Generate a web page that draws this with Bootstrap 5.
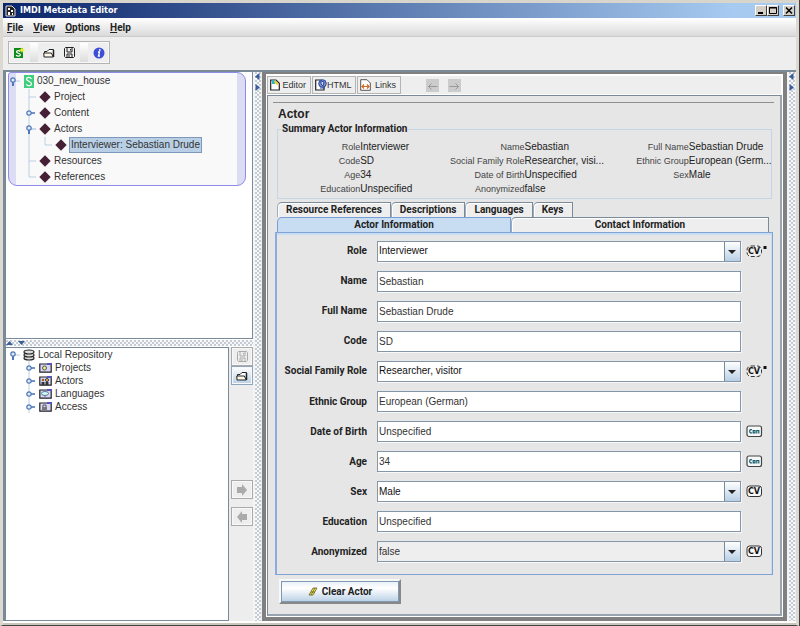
<!DOCTYPE html>
<html lang="en">
<head>
<meta charset="utf-8">
<meta name="viewport" content="width=device-width, initial-scale=1">
<title>IMDI Metadata Editor</title>
<link href="https://cdn.jsdelivr.net/npm/bootstrap@5.3.0/dist/css/bootstrap.min.css" rel="stylesheet">
<style>
:root{--slate:#7a8a99;--metal:#ededed;--form:#e6e6e6;--strong:Roboto,"Liberation Sans",Arial,sans-serif}
body{font-family:"Liberation Sans",Arial,sans-serif;font-size:10px;line-height:12px;color:#333;background:var(--metal)}
svg{display:block;flex:none}
button,input,select{font:inherit;color:inherit}
.app-window{min-height:100vh;border:3px solid #dcd9d0;border-top-color:#d8d5cc;border-bottom:1px solid #444}
.frame-right{border-right:1px solid #404040}
.title-bar{height:15px;background:linear-gradient(90deg,#0a246a,#a6caf0 92%);color:#fff;font:bold 9px/15px "DejaVu Sans Condensed","DejaVu Sans",sans-serif;padding:0 1px 0 2px}
.win-btn{width:12px;height:11px;padding:0;background:#d4d0c8;border:1px solid;border-color:#fff #404040 #404040 #fff;color:#000}
.menu-bar{height:19px;background:linear-gradient(#fff,#dadada);border-bottom:1px solid #ccc;padding:0 4px;gap:10px;font:bold 10px/17px var(--strong)}
.menu-bar a{color:#222;text-decoration:none}
.tool-area{height:33px;padding:4px 5px 0;background:#eee}
.tool-box{height:23px;border:1px solid #b4b4b4;outline:1px solid #f8f8f8;outline-offset:-2px}
.tool-box button{width:21px;border:0;background:none;padding:0;display:flex;align-items:center;justify-content:center}
.tool-gap{width:8px;height:19px;background:linear-gradient(#fff,#ddd)}
.main-split{min-height:0;border-top:2px solid var(--slate);border-left:3px solid var(--slate)}
.left-side{width:247px;min-width:0}
.tree-top{flex:266 1 0;background:#fff;border:1px solid var(--slate);border-top:0;border-left:0;padding:0 6px 0 2px}
.tree-bottom{flex:274 1 0;min-height:0}
.session-card{border:1px solid #8d8de8;border-radius:3px 9px 9px 9px;background:linear-gradient(90deg,#dcdcf4 7px,#f9f9f9 7px,#f9f9f9 calc(100% - 8px),#dcdcf4 calc(100% - 8px))}
.tree-list{list-style:none;margin:0;padding:0}
.tree-list li{display:flex;align-items:center;height:16px;gap:3px;white-space:nowrap}
.tree-list .tree-kid{margin-left:15px}
.repo-list{padding-left:3px}
.repo-list li{height:13px}
.tree-pick{background:#b8cfe5;border:1px solid #7d98bb;padding:0 1px;line-height:14px;margin-left:-1px}
.repo-panel{background:#fff;border:1px solid var(--slate);border-left:0;min-width:0}
.side-tools{width:24px;padding:0 0 0 2px}
.side-tools button{width:22px;height:19px;border:1px solid #aaa;background:#eee;padding:0;display:flex;align-items:center;justify-content:center;box-shadow:inset 0 0 0 1px #f8f8f8}
.side-tools .tool-on{background:linear-gradient(#fff,#b8cfe5);border-color:#8ea5bd}
.bumps{background:radial-gradient(circle at 1px 1px,#c3ccd6 0 .8px,transparent 1px) 0 0/4px 4px,radial-gradient(circle at 3px 3px,#c3ccd6 0 .8px,transparent 1px) 0 0/4px 4px,#f8f8f8}
.split-h{height:8px;border-top:1px solid #fff;border-bottom:1px solid #fff}
.split-v{width:9px;padding-top:1px;border-right:1px solid #eee;border-left:2px solid #f4f4f4}
.editor-frame{border:4px solid #808080;border-top-width:2px;min-width:0;background:#fff;padding:1px}
.view-bar{height:20px;background:#eee;box-shadow:inset 0 0 0 1px #fff;gap:1px}
.view-btn{height:18px;border:1px solid #b4b4b4;background:#eee;padding:0 4px 0 2px;font-size:9px;width:44px;display:flex;align-items:center;justify-content:space-between}
.nav-arrow{width:13px;height:13px;border:0;padding:0;background:#ccc}
.form-page{background:var(--form);border:1px solid var(--slate);border-right:2px solid #98a4b0;border-bottom:2px solid #98a4b0;padding:6px 7px 10px 7px;min-height:0}
.page-rule{margin:0 -1px 0 -2px;border-top:1px solid #8f8f8f;opacity:1}
.page-title{font-size:12px;line-height:14px;font-weight:bold;margin:4px 0 0 3px;color:#222}
.summary-box{border:1px solid #c5d5e6;margin:1px 1px 0 2px;padding:0 0 2px;min-width:0}
.summary-box legend{float:none;width:auto;margin:0 0 0 3px;padding:0 1px;font:bold 10px/14px var(--strong);color:#222}
.summary-grid{display:grid;grid-template-columns:repeat(6,minmax(0,1fr));grid-auto-rows:14px;margin:4px 0 0;line-height:14px;white-space:nowrap;color:#222}
.summary-grid dt{font-weight:normal;font-size:9px;text-align:right;color:#444}
.summary-grid dd{margin:0}
.tab-line{margin:0 4px 0 2px}
.tab-line-first{margin-top:3px}
.tab-btn{height:15px;border:1px solid var(--slate);border-bottom:0;border-left-color:#9dabba;background:#eee;color:#222;padding:0 8px;font:bold 10px/14px var(--strong);border-top-left-radius:5px;white-space:nowrap;box-shadow:inset 1px 1px #fff}
.tab-on{background:#c8ddf2;border-color:#7a9fd6;box-shadow:none}
.tab-panel{border:1px solid #7fa3d4;border-left:2px solid #8cabde;box-shadow:inset 0 2px #c8ddf2,inset -1px 0 #c8ddf2;padding:3px 0 7px;min-height:0}
.field-row{display:grid;grid-template-columns:90px minmax(0,1fr) 21px;column-gap:10px;align-items:center;flex:1 1 0}
.field-row label{font:bold 10px/12px var(--strong);color:#222;white-space:nowrap;justify-self:end}
.field-row .hint-col{margin-left:-5px}
.hint-col text{font:bold 8px "DejaVu Sans",sans-serif;fill:#111}
.meta-input{width:100%;height:21px;border:1px solid #8496a8;border-radius:0;background:#fff;padding:0 1px;box-shadow:1px 1px #f8f8f8;outline:0}
.meta-select{appearance:none;color:#111;background:url("data:image/svg+xml,%3Csvg xmlns='http://www.w3.org/2000/svg' width='16' height='19'%3E%3Cdefs%3E%3ClinearGradient id='g' x2='0' y2='1'%3E%3Cstop stop-color='%23fff'/%3E%3Cstop offset='1' stop-color='%23b8cfe5'/%3E%3C/linearGradient%3E%3C/defs%3E%3Cpath fill='url(%23g)' d='M1 0h15v19H1z'/%3E%3Cpath fill='%237a8a99' d='M0 0h1v19H0z'/%3E%3Cpath fill='%23222' d='M4 8h8l-4 4z'/%3E%3C/svg%3E") right 0 top 0 no-repeat #fff}
.meta-select:disabled{color:#333;background-color:#eee;opacity:1}
.clear-btn{align-self:flex-start;width:122px;height:25px;margin:4px 0 0 4px;border:2px solid;border-color:#f8f8f8 #888 #888 #f8f8f8;box-shadow:inset 0 0 0 1px #7f98b3;background:linear-gradient(#e8f0f8,#fff 35%,#b8cfe5);font:bold 10px/12px var(--strong);color:#222;display:flex;align-items:center;justify-content:center;gap:4px}
.bottom-edge{height:4px;background:linear-gradient(#fff 2px,#c9c5bb 2px)}
</style>
<script src="https://cdn.jsdelivr.net/npm/bootstrap@5.3.0/dist/js/bootstrap.bundle.min.js"></script>
</head>
<body>
<svg width="0" height="0" class="position-absolute" aria-hidden="true">
  <defs>
    <symbol id="i-folder" viewBox="0 0 12 10"><path d="M1.500 9V3.500H4L6 1.500H10.500V3" fill="#fff" stroke="#222"/><path d="M1 9 .8 5h7.500l2 4z" fill="#fff8ea" stroke="#222"/><path d="M10.500 2v7" stroke="#222" stroke-width="1.500"/></symbol>
    <symbol id="i-disk" viewBox="0 0 11 11"><path d="M1.500.5h8l1 1v8l-1 1h-8l-1-1v-8z" fill="#eee" stroke="currentColor"/><path d="M3 1v4h5V1M3 10V7h5v3M6.500 2v1.500M5 8v2" fill="none" stroke="currentColor"/></symbol>
    <symbol id="i-open" viewBox="0 0 14 16"><path d="M7 8h5" stroke="#b8cfe5"/><path d="M5 8v5" stroke="#4f78b8" stroke-width="2"/><circle cx="5" cy="7" r="2.200" fill="#dfeaf6" stroke="#4f78b8" stroke-width="1.200"/></symbol>
    <symbol id="i-shut" viewBox="0 0 14 16"><path d="M5 0v5.500M5 10.500V16" stroke="#b8cfe5"/><path d="M6 8h5" stroke="#4f78b8" stroke-width="1.600"/><circle cx="5" cy="8" r="2.200" fill="#dfeaf6" stroke="#4f78b8" stroke-width="1.200"/></symbol>
    <symbol id="i-mid" viewBox="0 0 14 16"><path d="M5 0v16M5 8h7" stroke="#b8cfe5" fill="none"/></symbol>
    <symbol id="i-end" viewBox="0 0 14 16"><path d="M5 0v8h7" stroke="#b8cfe5" fill="none"/></symbol>
    <symbol id="i-dia" viewBox="0 0 12 12"><path d="M6 .3 11.700 6 6 11.700.3 6z" fill="#452034"/></symbol>
    <symbol id="i-case" viewBox="0 0 13 11"><path d="M.8 2h11.400v8.200H.8z" fill="#d7d7fa" stroke="#222" stroke-width="1.200"/><path d="M8 1h5v2H8z" fill="#55b"/></symbol>
    <symbol id="i-left" viewBox="0 0 5 7"><path d="M4.500 0v7L0 3.500z" fill="#3b5e9b"/></symbol>
    <symbol id="i-right" viewBox="0 0 5 7"><path d="M.5 0v7L5 3.500z" fill="#3b5e9b"/></symbol>
    <symbol id="i-big" viewBox="0 0 10 12"><path d="M0 3h5V0l5 6-5 6V9H0z" fill="#aaa"/></symbol>
    <symbol id="i-arr" viewBox="0 0 13 13"><path d="M2.500 7.500h9M5.500 4.500l-3 3 3 3" fill="none" stroke="#999"/></symbol>
    <symbol id="i-con" viewBox="0 0 17 13"><rect x="1" y="1" width="14.500" height="10.500" rx="2" fill="#f8f8f8" stroke="#444" stroke-width="1.200"/><path d="M6 4.900C4.300 4 3.700 5 3.700 6.300S4.500 8.400 6 7.700M7.200 5.500h1.800v2.400H7.200zM10.800 8.500V5.500h2v3" fill="none" stroke="#14606e" stroke-width="1.200"/></symbol>
  </defs>
</svg>
<div class="frame-right">
<div class="app-window d-flex flex-column">
  <header class="title-bar d-flex align-items-center">
    <svg width="11" height="12" viewBox="0 0 11 12"><path d="M1 1h6l3 3v7H1z" fill="#222" stroke="#ddd"/><path d="M3 3h2v2H3zM6 5h2v2H6zM3 7h2v3H3zM7 8h1v2H7z" fill="#fff"/></svg>
    <span class="ms-1">IMDI Metadata Editor</span>
    <div class="ms-auto d-flex">
      <button class="win-btn" aria-label="Minimize"><svg width="10" height="9"><path d="M2 7h5" stroke="#000" stroke-width="2"/></svg></button>
      <button class="win-btn" aria-label="Maximize"><svg width="10" height="9"><path d="M1.500 1.500h7v6h-7zM1 2h8" fill="none" stroke="#000"/></svg></button>
      <button class="win-btn ms-1" aria-label="Close"><svg width="10" height="9"><path d="m2 1.500 6 6m0-6-6 6" stroke="#000" stroke-width="1.500"/></svg></button>
    </div>
  </header>
  <nav class="menu-bar d-flex align-items-center" aria-label="Main menu">
    <a href="#"><u>F</u>ile</a><a href="#"><u>V</u>iew</a><a href="#"><u>O</u>ptions</a><a href="#"><u>H</u>elp</a>
  </nav>
  <div class="tool-area d-flex align-items-start">
    <div class="tool-box d-flex align-items-center">
      <button aria-label="New session"><svg width="11" height="11" viewBox="0 0 11 11"><path d="M0 1h9v10H0z" fill="#0b8a1a"/><path d="M6.300 4.500C4.800 3 2.500 3.700 2.500 5s4 1.200 4 2.800S3.500 9.500 2 8.300" stroke="#fff" fill="none" stroke-width="1.200"/><path d="m8 0 .8 2L11 3l-2 1-1 2-1-2-2-1 2-1z" fill="#ee2"/></svg></button>
      <span class="tool-gap"></span>
      <button aria-label="Open"><svg width="12" height="10"><use href="#i-folder"/></svg></button>
      <button aria-label="Save"><svg width="11" height="11" color="#222"><use href="#i-disk"/></svg></button>
      <span class="tool-gap"></span>
      <button aria-label="About"><svg width="12" height="12"><circle cx="6" cy="6" r="5.500" fill="#3d4fd8"/><path d="M5 5h1.500L5.500 9H7" fill="none" stroke="#fff" stroke-width="1.300"/><circle cx="6.800" cy="3" r=".9" fill="#fff"/></svg></button>
    </div>
  </div>

  <main class="main-split d-flex flex-grow-1">
    <aside class="left-side d-flex flex-column flex-shrink-0">
      <section class="tree-top" aria-label="Session">
        <div class="session-card">
          <ul class="tree-list">
            <li><svg width="12" height="16"><use href="#i-open" x="-1" width="14" height="16"/></svg><svg width="10" height="13" viewBox="0 0 10 13"><path d="M0 0h10v13H0z" fill="#3ecf7e"/><path d="M7.500 4C6 1.500 2.500 2.300 2.500 4.300S7.500 6.300 7.500 8.700 4 11.500 2.300 9.300" stroke="#fff" stroke-width="1.300" fill="none"/></svg><span>030_new_house</span></li>
            <li class="tree-kid"><svg width="12" height="16"><use href="#i-mid" width="14" height="16"/></svg><svg width="12" height="12"><use href="#i-dia"/></svg>Project</li>
            <li class="tree-kid"><svg width="12" height="16"><use href="#i-shut" width="14" height="16"/></svg><svg width="12" height="12"><use href="#i-dia"/></svg>Content</li>
            <li class="tree-kid"><svg width="12" height="16"><use href="#i-mid" width="14" height="16"/><use href="#i-open" width="14" height="16"/></svg><svg width="12" height="12"><use href="#i-dia"/></svg>Actors</li>
            <li class="tree-kid"><svg width="28" height="16"><path d="M5 0v16" stroke="#b8cfe5"/><use href="#i-end" x="16" width="14" height="16"/></svg><svg width="12" height="12"><use href="#i-dia"/></svg><span class="tree-pick">Interviewer: Sebastian Drude</span></li>
            <li class="tree-kid"><svg width="12" height="16"><use href="#i-mid" width="14" height="16"/></svg><svg width="12" height="12"><use href="#i-dia"/></svg>Resources</li>
            <li class="tree-kid"><svg width="12" height="16"><use href="#i-end" width="14" height="16"/></svg><svg width="12" height="12"><use href="#i-dia"/></svg>References</li>
          </ul>
        </div>
      </section>
      <div class="split-h bumps d-flex align-items-center gap-1"><svg width="8" height="6"><path d="M0 5h7L3.500 1z" fill="#3b5e9b"/></svg><svg width="8" height="6"><path d="M0 1h7L3.500 5z" fill="#3b5e9b"/></svg></div>
      <div class="tree-bottom d-flex">
        <section class="repo-panel flex-grow-1" aria-label="Repository">
          <ul class="tree-list repo-list">
            <li><svg width="11" height="13"><use href="#i-open" x="-1" y="-1" width="14" height="16"/></svg><svg width="12" height="12" viewBox="0 0 12 12"><g fill="#ddd" stroke="#222" stroke-width="1.200"><ellipse cx="6" cy="9" rx="5" ry="2"/><ellipse cx="6" cy="6" rx="5" ry="2"/><ellipse cx="6" cy="3" rx="5" ry="2"/></g></svg><span>Local Repository</span></li>
            <li class="tree-kid"><svg width="12" height="13"><use href="#i-shut" y="-1" width="14" height="16"/></svg><svg width="13" height="11"><use href="#i-case"/><circle cx="5.500" cy="6" r="2" fill="#ee8" stroke="#555"/></svg><span>Projects</span></li>
            <li class="tree-kid"><svg width="12" height="13"><use href="#i-shut" y="-1" width="14" height="16"/></svg><svg width="13" height="11"><use href="#i-case"/><circle cx="4" cy="5" r="1.300" fill="#a52"/><circle cx="8" cy="5" r="1.500" fill="#fc6" stroke="#333"/><path d="M2.500 7h3v3h-3zM6.500 7h3v3h-3z" fill="#333"/></svg><span>Actors</span></li>
            <li class="tree-kid"><svg width="12" height="13"><use href="#i-shut" y="-1" width="14" height="16"/></svg><svg width="13" height="11"><use href="#i-case"/><ellipse cx="6" cy="5.500" rx="3.500" ry="2" fill="#cff" stroke="#678"/><path d="M6 7v2" stroke="#678"/></svg><span>Languages</span></li>
            <li class="tree-kid"><svg width="12" height="13"><use href="#i-shut" y="-1" width="14" height="16"/></svg><svg width="13" height="11"><use href="#i-case"/><path d="M3 6h5v3H3z" fill="#777"/><path d="M4 6V4h3v2" fill="none" stroke="#555"/></svg><span>Access</span></li>
          </ul>
        </section>
        <div class="side-tools d-flex flex-column">
          <button aria-label="Save to repository" disabled><svg width="11" height="11" color="#aaa"><use href="#i-disk"/></svg></button>
          <button aria-label="Open repository" class="tool-on"><svg width="12" height="10"><use href="#i-folder"/></svg></button>
          <span class="flex-grow-1"></span>
          <button aria-label="Move right" disabled><svg width="10" height="12"><use href="#i-big"/></svg></button>
          <button aria-label="Move left" disabled class="mt-2"><svg width="10" height="12"><use href="#i-big" transform="rotate(180 5 6)"/></svg></button>
          <span class="flex-grow-1"></span>
        </div>
      </div>
    </aside>
    <div class="split-v bumps d-flex flex-column gap-1 flex-shrink-0"><svg width="5" height="7"><use href="#i-left"/></svg><svg width="5" height="7"><use href="#i-right"/></svg></div>

    <section class="editor-frame flex-grow-1 d-flex flex-column">
      <div class="view-bar d-flex align-items-center flex-shrink-0">
        <button class="view-btn"><svg width="10" height="12" viewBox="0 0 10 12"><path d="M.7 1H6l3.300 3.300V11H.7z" fill="#fff" stroke="#222" stroke-width="1.200"/><path d="M2 1h3v4H2z" fill="#29b6c8"/><path d="m5 1 4 4-2 1-3-3z" fill="#ec3"/></svg>Editor</button>
        <button class="view-btn"><svg width="12" height="12" viewBox="0 0 12 12"><path d="M.7 1H6l3 3v7H.7z" fill="#fff" stroke="#222" stroke-width="1.200"/><circle cx="7.500" cy="4.500" r="3.800" fill="#88c" stroke="#224a9b"/><path d="M6 2l3 1-1 4-2-2zM5 9h5" fill="#cdf" stroke="#224a9b"/></svg>HTML</button>
        <button class="view-btn"><svg width="11" height="12" viewBox="0 0 11 12"><path d="M.7.700H7L10.300 4v7.300H.7z" fill="#fff" stroke="#555"/><path d="M2 7.500h7M4 5.500l-2 2 2 2M7 5.500l2 2-2 2" fill="none" stroke="#d06a20" stroke-width="1.200"/></svg>Links</button>
        <button class="nav-arrow ms-4" aria-label="Back" disabled><svg width="13" height="13"><use href="#i-arr"/></svg></button>
        <button class="nav-arrow ms-2" aria-label="Forward" disabled><svg width="13" height="13"><g transform="matrix(-1 0 0 1 13 0)"><use href="#i-arr"/></g></svg></button>
      </div>
      <form class="form-page flex-grow-1 d-flex flex-column">
        <hr class="page-rule">
        <h1 class="page-title">Actor</h1>
        <fieldset class="summary-box">
          <legend>Summary Actor Information</legend>
          <dl class="summary-grid">
            <dt>Role</dt><dd>Interviewer</dd><dt>Name</dt><dd>Sebastian</dd><dt>Full Name</dt><dd>Sebastian Drude</dd>
            <dt>Code</dt><dd>SD</dd><dt>Social Family Role</dt><dd>Researcher, visi...</dd><dt>Ethnic Group</dt><dd>European (Germ...</dd>
            <dt>Age</dt><dd>34</dd><dt>Date of Birth</dt><dd>Unspecified</dd><dt>Sex</dt><dd>Male</dd>
            <dt>Education</dt><dd>Unspecified</dd><dt>Anonymized</dt><dd>false</dd>
          </dl>
        </fieldset>
        <div class="tab-line tab-line-first d-flex">
          <button type="button" class="tab-btn">Resource References</button><button type="button" class="tab-btn">Descriptions</button><button type="button" class="tab-btn">Languages</button><button type="button" class="tab-btn">Keys</button>
        </div>
        <div class="tab-line d-flex">
          <button type="button" class="tab-btn tab-on" style="flex:9 1 0">Actor Information</button><button type="button" class="tab-btn" style="flex:10 1 0">Contact Information</button>
        </div>
        <div class="tab-panel d-flex flex-column flex-grow-1">
          <div class="field-row"><label for="f1">Role</label><select id="f1" class="meta-input meta-select"><option>Interviewer</option></select><svg class="hint-col" width="22" height="13"><rect x="1" y="1" width="14.500" height="10.500" rx="4" fill="#eee" stroke="#333" stroke-dasharray="4 2"/><text x="2" y="9">CV</text><path d="M17.500 1h3v3h-3z" fill="#111"/></svg></div>
          <div class="field-row"><label for="f2">Name</label><input id="f2" class="meta-input" value="Sebastian"></div>
          <div class="field-row"><label for="f3">Full Name</label><input id="f3" class="meta-input" value="Sebastian Drude"></div>
          <div class="field-row"><label for="f4">Code</label><input id="f4" class="meta-input" value="SD"></div>
          <div class="field-row"><label for="f5">Social Family Role</label><select id="f5" class="meta-input meta-select"><option>Researcher, visitor</option></select><svg class="hint-col" width="22" height="13"><rect x="1" y="1" width="14.500" height="10.500" rx="4" fill="#eee" stroke="#333" stroke-dasharray="4 2"/><text x="2" y="9">CV</text><path d="M17.500 1h3v3h-3z" fill="#111"/></svg></div>
          <div class="field-row"><label for="f6">Ethnic Group</label><input id="f6" class="meta-input" value="European (German)"></div>
          <div class="field-row"><label for="f7">Date of Birth</label><input id="f7" class="meta-input" value="Unspecified"><svg class="hint-col" width="17" height="13"><use href="#i-con"/></svg></div>
          <div class="field-row"><label for="f8">Age</label><input id="f8" class="meta-input" value="34"><svg class="hint-col" width="17" height="13"><use href="#i-con"/></svg></div>
          <div class="field-row"><label for="f9">Sex</label><select id="f9" class="meta-input meta-select"><option>Male</option></select><svg class="hint-col" width="17" height="13"><rect x="1" y="1" width="14.500" height="10.500" rx="2.500" fill="#f8f8f8" stroke="#333"/><text x="2" y="9">CV</text></svg></div>
          <div class="field-row"><label for="f10">Education</label><input id="f10" class="meta-input" value="Unspecified"></div>
          <div class="field-row"><label for="f11">Anonymized</label><select id="f11" class="meta-input meta-select" disabled><option>false</option></select><svg class="hint-col" width="17" height="13"><rect x="1" y="1" width="14.500" height="10.500" rx="2.500" fill="#f8f8f8" stroke="#333"/><text x="2" y="9">CV</text></svg></div>
        </div>
        <button type="button" class="clear-btn"><svg width="10" height="10" viewBox="0 0 10 10"><path d="M1 8 5 1h4L5 8zM3 8l4-7M3 5h4" fill="#f3ee70" stroke="#665a10" stroke-width=".8"/></svg>Clear Actor</button>
      </form>
    </section>
    <div class="split-v bumps d-flex flex-column gap-1 flex-shrink-0"><svg width="5" height="7"><use href="#i-left"/></svg><svg width="5" height="7"><use href="#i-right"/></svg></div>
  </main>
  <div class="bottom-edge"></div>
</div>
</div>
</body>
</html>
